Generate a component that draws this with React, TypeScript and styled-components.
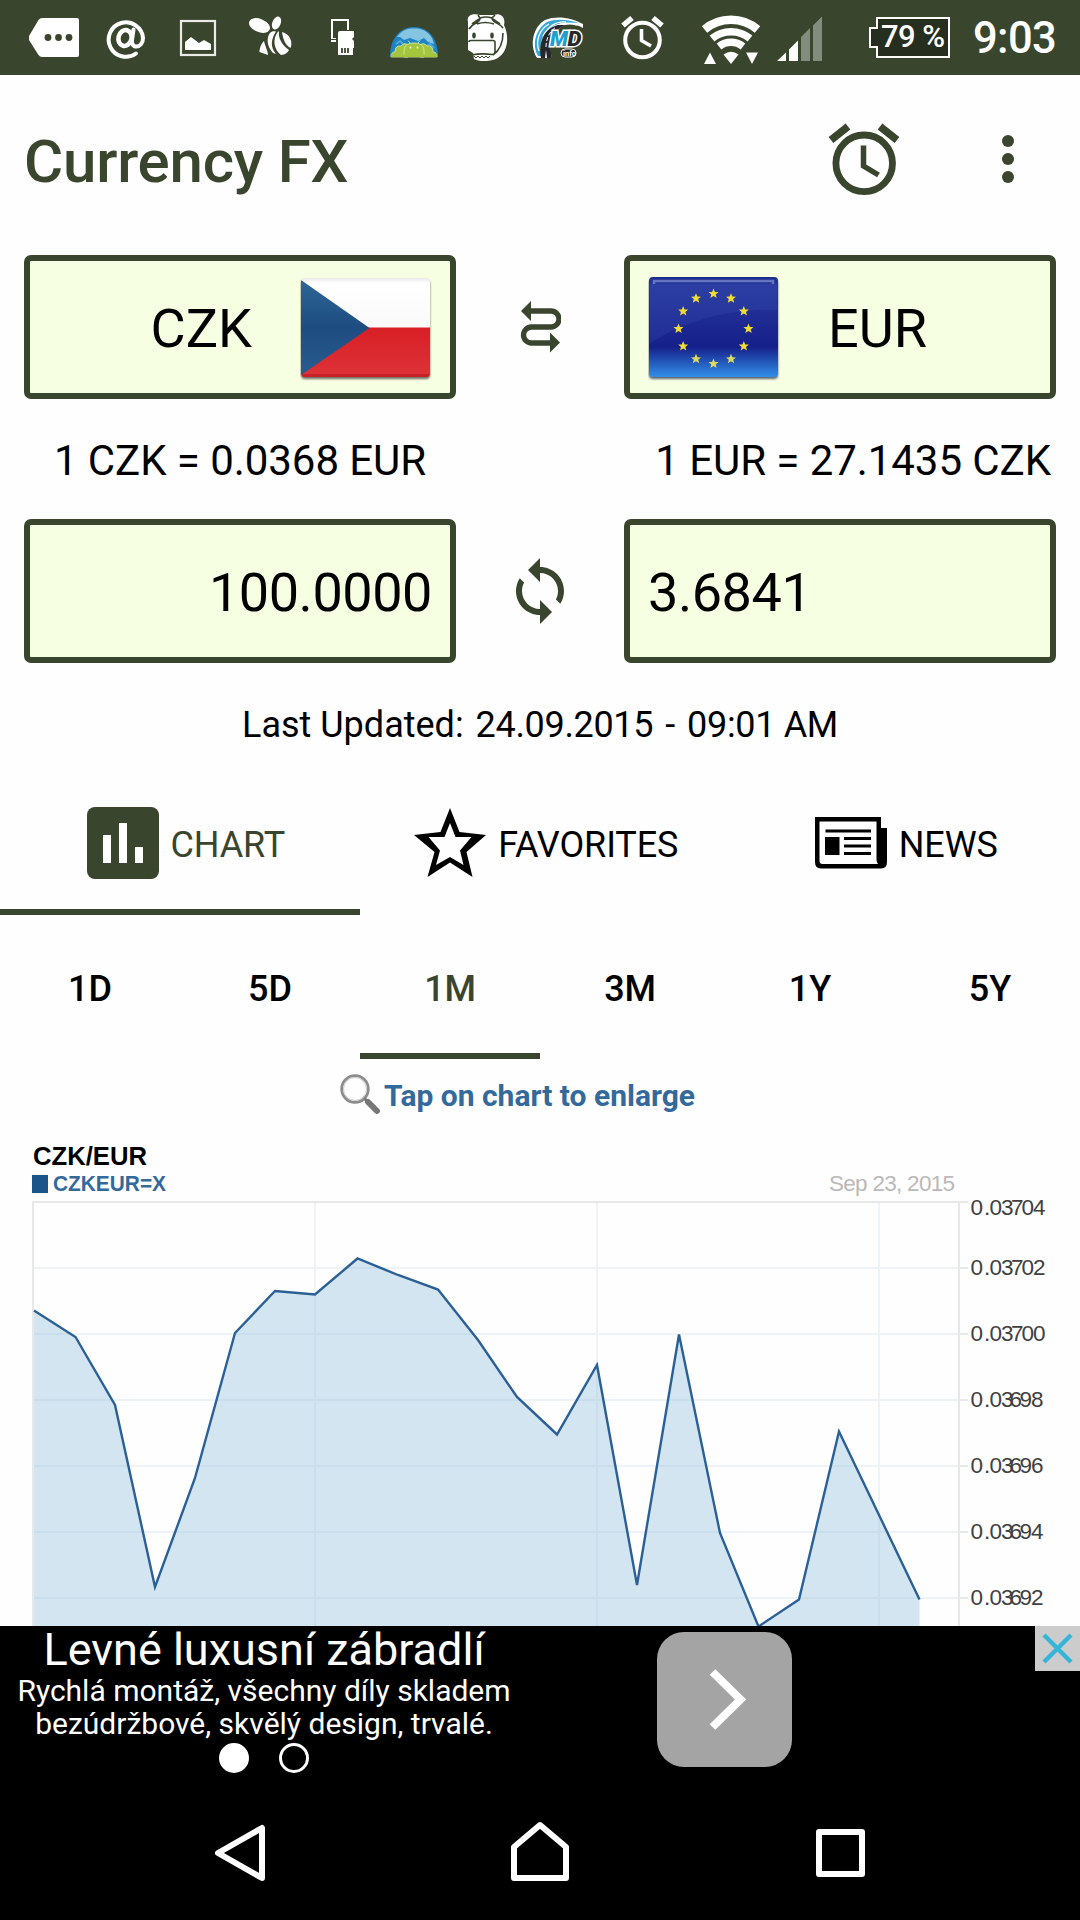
import React from 'react';
import styled, { createGlobalStyle } from 'styled-components';
import { MdSync } from 'react-icons/md';

const GREEN = '#3a452d';
const CREAM = '#f7ffe3';

const GlobalStyle = createGlobalStyle`
  * { box-sizing: border-box; }
  body { margin: 0; background: #fff; font-family: Roboto, "Noto Sans", sans-serif; color: #000; }
  svg { display: block; flex: none; }
`;

const Screen = styled.div`
  width: 1080px;
  height: 1920px;
  display: flex;
  flex-direction: column;
  overflow: hidden;
  background: #fefefe;
`;

const StatusBar = styled.header`
  height: 75px;
  flex: none;
  display: flex;
  align-items: center;
  background: ${GREEN};
  color: #fff;
`;

const Battery = styled.div`
  width: 81px;
  height: 41px;
  margin: 0 0 0 41px;
  display: grid;
  svg, span { grid-area: 1 / 1; }
`;

const BatteryText = styled.span`
  padding-left: 12px;
  font-size: 31px;
  font-weight: 500;
  line-height: 39px;
  white-space: nowrap;
  letter-spacing: -0.6px;
`;

const Clock = styled.span`
  margin-left: 23px;
  font-size: 43.5px;
  font-weight: 500;
  line-height: 78px;
  padding-top: 2px;
  letter-spacing: -0.6px;
`;

const TitleBar = styled.div`
  height: 180px;
  flex: none;
  display: flex;
  align-items: center;
  padding: 0 62px 12px 24px;
`;

const Title = styled.h1`
  margin: 6px auto 0 0;
  font-size: 60px;
  line-height: 72px;
  font-weight: 500;
  color: ${GREEN};
  letter-spacing: -0.2px;
`;

const MenuIcon = styled.svg`
  margin-left: 94px;
`;

const Converter = styled.section`
  flex: none;
  display: grid;
  grid-template-columns: 432px 1fr 432px;
  grid-template-rows: 144px 120px 144px;
  padding: 0 24px;
  align-items: center;
  justify-items: center;
`;

const Field = styled.div<{ $align: 'start' | 'end'; $gap?: number }>`
  width: 432px;
  height: 144px;
  display: flex;
  align-items: center;
  justify-content: flex-${(p) => p.$align};
  gap: ${(p) => p.$gap ?? 0}px;
  padding: 0 18px;
  border: 6px solid ${GREEN};
  border-radius: 7px;
  background: ${CREAM};
`;

const FieldText = styled.span<{ $number?: boolean }>`
  padding-top: 4px;
  font-size: 54px;
  line-height: 64px;
  letter-spacing: ${(p) => (p.$number ? -0.45 : 0)}px;
`;

const Rate = styled.div<{ $right?: boolean }>`
  padding-top: 4px;
  font-size: 42px;
  line-height: 50px;
  letter-spacing: -0.06px;
  white-space: nowrap;
  justify-self: ${(p) => (p.$right ? 'end' : 'center')};
  padding-right: ${(p) => (p.$right ? 5 : 0)}px;
`;

const Updated = styled.div`
  flex: none;
  height: 108px;
  padding-top: 8px;
  display: flex;
  justify-content: center;
  gap: 12px;
  font-size: 36px;
  line-height: 109px;
  white-space: nowrap;
`;

const Digits = styled.span`
  letter-spacing: -0.33px;
`;

const TabRow = styled.nav<{ $cols: number }>`
  flex: none;
  height: 144px;
  display: grid;
  grid-template-columns: repeat(${(p) => p.$cols}, 1fr);
`;

const Tab = styled.div<{ $active?: boolean; $bold?: boolean }>`
  display: flex;
  align-items: center;
  justify-content: center;
  gap: 11px;
  padding: ${(p) => (p.$bold ? '6px 0 0' : '6px 0 0 12.5px')};
  font-size: 36px;
  font-weight: ${(p) => (p.$bold ? 500 : 400)};
  color: ${(p) => (p.$active ? GREEN : '#000')};
  border-bottom: 6px solid ${(p) => (p.$active ? GREEN : 'transparent')};
`;

const TabLabel = styled.span`
  padding-top: 4px;
  line-height: 44px;
  letter-spacing: -0.1px;
`;

const Hint = styled.div`
  flex: none;
  height: 72px;
  display: flex;
  align-items: center;
  padding-left: 339px;
  gap: 3px;
  font-size: 30px;
  font-weight: 700;
  color: #336a9b;
`;

const ChartArea = styled.div`
  flex: none;
  height: 495px;
  overflow: hidden;
`;

const Ad = styled.aside`
  flex: none;
  height: 174px;
  display: flex;
  align-items: flex-start;
  background: #000;
  color: #fff;
`;

const AdCopy = styled.div`
  width: 528px;
  display: flex;
  flex-direction: column;
  align-items: center;
  text-align: center;
`;

const AdTitle = styled.div`
  font-size: 45px;
  line-height: 48px;
  white-space: nowrap;
`;

const AdText = styled.div`
  font-size: 30px;
  line-height: 33px;
  white-space: nowrap;
`;

const Dots = styled.div`
  display: flex;
  gap: 30px;
  margin-top: 3px;
`;

const Dot = styled.i<{ $on?: boolean }>`
  width: 30px;
  height: 30px;
  border-radius: 50%;
  border: 3px solid #fff;
  background: ${(p) => (p.$on ? '#fff' : 'transparent')};
`;

const AdButton = styled.div`
  width: 135px;
  height: 135px;
  margin: 6px auto 0 129px;
  border-radius: 27px;
  background: #a4a4a4;
`;

const AdClose = styled.div`
  width: 45px;
  height: 45px;
  background: #ccc;
`;

const NavBar = styled.footer`
  flex: 1;
  display: flex;
  justify-content: center;
  background: #000;
`;

/* Each status glyph occupies a horizontal slice of the 75px-high bar. */
const Slice = ({ x, w, children }: { x: number; w: number; children: React.ReactNode }) => (
  <svg width={w} height={75} viewBox={`${x} 0 ${w} 75`} fill="#fff">{children}</svg>
);

const StatusIcons = () => (
  <>
    <Slice x={0} w={93}>
      <path d="M42 18H77Q79 18 79 20V55Q79 57 77 57H42Q40 57 38.500 55L29 40V36L38.500 20Q40 18 42 18Z" />
      <g fill={GREEN}><circle cx="48" cy="37.500" r="3.400" /><circle cx="58.500" cy="37.500" r="3.400" /><circle cx="69" cy="37.500" r="3.400" /></g>
    </Slice>
    <Slice x={93} w={67}>
      <g fill="none" stroke="#fff" strokeWidth="4" strokeLinecap="round">
        <path d="M136 53.500A17.200 17.200 0 1 1 143 38C143 43 140 46.500 136.500 46.500S131.500 43.500 132 40L133.500 29.500" />
        <ellipse cx="125" cy="38" rx="6.500" ry="8" transform="rotate(15 125 38)" strokeWidth="4.500" />
      </g>
    </Slice>
    <Slice x={160} w={74}>
      <rect x="181" y="21" width="34" height="34" fill="none" stroke="#e9ebe7" strokeWidth="2.200" />
      <path d="M185 50V42L191 37L199 43L204 40L211 44V50Z" />
    </Slice>
    <Slice x={234} w={72}>
      <ellipse cx="259.500" cy="25.500" rx="11" ry="6.600" transform="rotate(22 259.500 25.500)" />
      <ellipse cx="276.500" cy="23" rx="4.200" ry="6.800" transform="rotate(22 276.500 23)" />
      <path d="M270 33C266 38 267 47 273 53L276 54C270 47 271 39 276 31.500C273 31 271.500 31.500 270 33Z" />
      <path d="M278 31.500C272 39 274 50 281 55C285 55 288 52 289 50C282 45 278 38 279 31.500Z" />
      <path d="M282 32C283 39 285 45 290.500 48C293 42 290 34 282 32Z" />
      <path d="M264 41C260 45 259.500 50 259.500 52L268 55C268 51 265 46 264 41Z" />
    </Slice>
    <Slice x={306} w={66}>
      <path d="M331 19H349V30H347V21H333V38H336V42H331Z" />
      <path d="M331 39.500H336" stroke={GREEN} />
      <path d="M340 31H354V37L352 39L354 41V48H353V55H338V33Q338 31 340 31Z" />
      <path d="M342 48V53M345 48V53M348 48V53" stroke={GREEN} strokeWidth="1.800" />
    </Slice>
    <Slice x={372} w={84}>
      <path d="M390 57C390 38 400 27 414 27S438 38 438 57Z" fill="#1f84c4" />
      <path d="M397 37C402 30 407 28.500 414 28.500S427 30 432 38L434 44L428 42L424 38L418 41L410 38L404 40L400 37Z" fill="#86c5e2" />
      <path d="M396 44l4-3 3 3M425 47l5-3 4 4" fill="none" stroke="#4fa9d6" strokeWidth="2" />
      <g fill="#a4c63c" stroke="#dcebb0" strokeWidth=".8">
        <path d="M391 57Q391 52 395 52Q395 45 401 46Q404 42 408 45V57ZM437 57Q437 52 433 52Q433 45 427 46Q424 42 420 45V57Z" />
        <path d="M404 57V51C404 45 408 43 414 43S424 45 424 51V57ZM410 43L408 40.500M418 43L420 40.500" />
      </g>
      <path d="M391 54.500H437V57H391Z" fill="#a4c63c" />
      <circle cx="410.500" cy="47.500" r=".9" /><circle cx="417.500" cy="47.500" r=".9" />
    </Slice>
    <Slice x={456} w={66}>
      <path d="M468 22C466 15 473 13 480 15H494C501 12 506 18 504 25C510 38 507 52 499 57C494 62 478 62 474 59L473 53L468 50V25Z" />
      <g fill="none" stroke={GREEN} strokeWidth="1.600">
        <path d="M469 29C473 22 480 24 480 18L478 15M503 28C498 21 493 24 492 18L495 15M480 18Q486 16 492 18M472 24L479 19M500 24L493 19M477 24Q485 21 494 24" />
        <path d="M469 42Q469 40.500 471 40.500H493Q495 40.500 495 42.500V52Q495 54.500 492 54.500Q482 53 471 55M493 55Q503 48 503 33" />
      </g>
      <ellipse cx="474" cy="35.500" rx="1.800" ry="3" fill={GREEN} />
      <ellipse cx="492" cy="35.500" rx="1.800" ry="3" fill={GREEN} />
      <path d="M474 56l2 2 2-2 2 2 2-2 2 2 2-2 2 2 2-2" stroke={GREEN} fill="none" />
    </Slice>
    <Slice x={522} w={78}>
      <path d="M537 58C529 45 533 27 545 20C557 15 572 18 583 24V28C569 20 559 26 554 35C549 43 550 51 552 58Z" />
      <path d="M538 56C531 43 537 28 547 22C557 18 570 20 579 23C562 21 550 24 543 36C540 43 540 50 542 56Z" fill="#35a8d8" />
      <path d="M539 51C535 40 540 29 549 24M566 22C555 21 548 27 543 36M577 25C566 22 558 23 551 29" stroke="#fff" strokeWidth="1.300" fill="none" />
      <path d="M541 58C538 43 544 28 558 25L566 25C554 29 548 40 552 58H547L546 50L545 58Z" fill="#25282a" />
      <path d="M546 47C546 38 550 31 556 27" stroke="#fff" fill="none" strokeDasharray="4 2" />
      <g fontFamily="Roboto, sans-serif" fontStyle="italic" fontWeight="900" fontSize="21" stroke="#fff" strokeWidth="2.800" paintOrder="stroke">
        <text x="550" y="46" fill="#1e9fd0" textLength="18" lengthAdjust="spacingAndGlyphs">M</text>
        <text x="567.500" y="46" fill="#25282a" textLength="14" lengthAdjust="spacingAndGlyphs">D</text>
      </g>
      <rect x="561" y="49" width="15" height="8" rx="4" fill="#25282a" stroke="#fff" />
      <text x="563" y="56" fontSize="7.500" fontWeight="700" fontFamily="Roboto, sans-serif">info</text>
    </Slice>
    <Slice x={600} w={84}>
      <g fill="none" stroke="#fff">
        <circle cx="642.500" cy="40" r="17.300" strokeWidth="4" />
        <path d="M641.500 29V40.500L651 46" strokeWidth="3.600" />
        <path d="M623 25.500L632 18M662 25.500L653 18" strokeWidth="5.500" />
      </g>
    </Slice>
    <Slice x={684} w={84}>
      <g fill="none" stroke="#fff">
        <path d="M704.500 29.500A41 41 0 0 1 757.500 29.500" strokeWidth="8.500" />
        <path d="M712 38.500A30 30 0 0 1 750 38.500" strokeWidth="7.500" />
        <path d="M719 46.500A19 19 0 0 1 743 46.500" strokeWidth="7.500" />
      </g>
      <path d="M723.500 54.500Q731 49 738.500 54.500L731 64Z" />
      <path d="M704 64L710 52.500L716 64ZM746 52.500H758L752 64Z" />
    </Slice>
    <Slice x={768} w={60}>
      <path d="M777 61L786 52.500V61ZM789 61V49.500L798 40.500V61Z" />
      <path d="M801 61V37L810 28V61ZM813 61V25.500L822 16.500V61Z" fill="#838d7d" />
    </Slice>
  </>
);

const HeaderAlarm = () => (
  <svg width="80" height="80" viewBox="824 119 80 80" fill="none" stroke={GREEN}>
    <circle cx="864.200" cy="163.300" r="28.300" strokeWidth="6.800" />
    <path d="M863.500 145.500V166L878.500 175" strokeWidth="5.500" />
    <path d="M831 140L848 126.500M897 140L880 126.500" strokeWidth="7.500" />
  </svg>
);

const Menu = () => (
  <MenuIcon width="20" height="80" viewBox="998 119 20 80" fill={GREEN}>
    <circle cx="1008" cy="141" r="6" /><circle cx="1008" cy="159" r="6" /><circle cx="1008" cy="177" r="6" />
  </MenuIcon>
);

const CzechFlag = () => (
  <svg width="132" height="108" viewBox="300 273 132 108">
    <defs>
      <linearGradient id="cw" x2="0" y2="1"><stop stopColor="#e9e9ee" /><stop offset=".1" stopColor="#fff" /><stop offset="1" stopColor="#fafafa" /></linearGradient>
      <linearGradient id="cr" x2="0" y2="1"><stop stopColor="#d81f25" /><stop offset="1" stopColor="#dd3338" /></linearGradient>
      <linearGradient id="cb" x2="0" y2="1"><stop stopColor="#2e6598" /><stop offset=".5" stopColor="#1d4c80" /><stop offset="1" stopColor="#295c90" /></linearGradient>
      <clipPath id="cc"><rect x="301" y="278" width="129" height="99" rx="4" /></clipPath>
      <filter id="soft"><feGaussianBlur stdDeviation="1.300" /></filter>
    </defs>
    <rect x="301" y="280" width="129" height="99" rx="4" fill="#6d6a60" filter="url(#soft)" />
    <g clipPath="url(#cc)">
      <rect x="301" y="278" width="129" height="50" fill="url(#cw)" />
      <rect x="301" y="327.500" width="129" height="50" fill="url(#cr)" />
      <path d="M301 280L369.500 328L301 375Z" fill="url(#cb)" />
      <path d="M301 375.500H430" stroke="#b5161d" strokeWidth="3" opacity=".55" />
    </g>
  </svg>
);

const STAR = 'M0 -5L1.400 -1.600L5 -1.400L2.200 .9L3.200 4.500L0 2.500L-3.200 4.500L-2.200 .9L-5 -1.400L-1.400 -1.600Z';

const EuroFlag = () => (
  <svg width="132" height="108" viewBox="648 273 132 108">
    <defs>
      <linearGradient id="eu" x2="0" y2="1">
        <stop stopColor="#1c2d8c" /><stop offset=".08" stopColor="#27389d" /><stop offset=".7" stopColor="#16208a" /><stop offset="1" stopColor="#318fe8" />
      </linearGradient>
      <linearGradient id="eg" x2="0" y2="1"><stop stopColor="#3448ac" stopOpacity=".4" /><stop offset="1" stopColor="#2c3fa5" stopOpacity=".4" /></linearGradient>
      <filter id="softEu"><feGaussianBlur stdDeviation="1.300" /></filter>
    </defs>
    <rect x="649" y="279" width="129" height="100" rx="4" fill="#5d6270" filter="url(#softEu)" />
    <rect x="649" y="277" width="129" height="100" rx="4" fill="url(#eu)" />
    <path d="M650 284V343C690 318 735 308 777 310V284Z" fill="url(#eg)" />
    <path d="M654 284V281H773V284" fill="none" stroke="#8591d3" strokeWidth="2.500" opacity=".7" />
    {Array.from({ length: 12 }, (_, i) => {
      const a = (i * Math.PI) / 6;
      return <path key={i} d={STAR} fill={i > 4 && i < 8 ? '#dcdc60' : '#f0dc32'} transform={`translate(${713.5 + 35 * Math.sin(a)} ${328.5 - 35 * Math.cos(a)})`} />;
    })}
  </svg>
);

const SwapIcon = () => (
  <svg width="42" height="56" viewBox="520 299 42 56">
    <path d="M530 311H552A8 8 0 0 1 552 327H532.500A8 8 0 0 0 532.500 343H552" fill="none" stroke={GREEN} strokeWidth="5.300" />
    <path d="M522 311L532 301V321ZM561 342.500L551 332.500V352.500Z" fill={GREEN} />
  </svg>
);

const ChartIcon = () => (
  <svg width="72" height="72" viewBox="0 0 72 72">
    <rect width="72" height="72" rx="8" fill={GREEN} />
    <path d="M16 28H24V56H16ZM32 16H40V56H32ZM48 40H56V56H48Z" fill="#fff" />
  </svg>
);

const StarIcon = () => (
  <svg width="73" height="72" viewBox="414 807 73 72">
    <path fillRule="evenodd" d="M450 808L459.500 832L486 835L466.500 852L472.500 877L450 862.500L427.500 877L434.500 852L414 835L440.500 832ZM450 823L455.500 837H471.500L460 850.500L463.500 865L450 857L436 865L440 850.500L428.500 837H444.500Z" />
  </svg>
);

const NewsIcon = () => (
  <svg width="73" height="72" viewBox="814 807 73 72">
    <path fillRule="evenodd" d="M814 817H880V828H886V862Q886 868.500 880 868.500H820Q814 868.500 814 862ZM818.500 821.500V861Q818.500 864 821.500 864H877Q875.500 862 875.500 860V821.500Z" />
    <path d="M824.500 831H870M843 838.500H870M843 846H870M843 853.500H870" stroke="#000" strokeWidth="3" />
    <rect x="824" y="837" width="14.500" height="18" />
  </svg>
);

const Magnifier = () => (
  <svg width="42" height="44" viewBox="339 1073 42 44" fill="none">
    <circle cx="355" cy="1089" r="13.300" stroke="#8c8c8c" strokeWidth="2.800" />
    <circle cx="355" cy="1089" r="11.500" stroke="#ccc" />
    <path d="M364.500 1098.500L368 1102" stroke="#777" strokeWidth="3" />
    <path d="M368 1102L377 1111" stroke="#777" strokeWidth="6" strokeLinecap="round" />
  </svg>
);

const POINTS: [number, number][] = [
  [34, 1310.5], [75.5, 1337], [115, 1405], [155, 1587], [195, 1478], [235, 1333], [275, 1291], [315, 1294.5],
  [357.5, 1258.5], [398, 1275], [438, 1289.5], [478, 1340], [517, 1397], [557, 1434.5], [597, 1365],
  [637, 1585], [679, 1334.5], [720, 1533], [758.5, 1626.5], [799, 1599.5], [839, 1431.5], [879, 1515], [919.5, 1599.5],
];

/* The last digits sit tighter together on the labels that contain a 6 and a 9. */
const WIDE = [970.5, 984, 989.5, 1001, 1011, 1021.5, 1033];
const TIGHT = [970.5, 984, 989.5, 1001, 1009.5, 1019.5, 1031];
const LABELS: [string, number, number[]][] = [
  ['0.03704', 1215, WIDE],
  ['0.03702', 1275, WIDE],
  ['0.03700', 1341, WIDE],
  ['0.03698', 1407, TIGHT],
  ['0.03696', 1473, TIGHT],
  ['0.03694', 1539, TIGHT],
  ['0.03692', 1605, TIGHT],
];
const GRID_Y = [1268, 1334, 1400, 1466, 1532, 1598];
const GRID_X = [315, 597, 879];

const RateChart = () => {
  const line = POINTS.map((p) => p.join(',')).join(' ');
  return (
    <svg width="1080" height="495" viewBox="0 1131 1080 495" fontFamily='"Liberation Sans", Arial, sans-serif'>
      <text x="33" y="1165" fontSize="25" fontWeight="700" textLength="114" lengthAdjust="spacingAndGlyphs">CZK/EUR</text>
      <rect x="32" y="1175" width="16" height="18" fill="#1b5489" />
      <text x="53" y="1191" fontSize="22.500" fontWeight="700" fill="#336a9b" textLength="113" lengthAdjust="spacingAndGlyphs">CZKEUR=X</text>
      <text x="829" y="1191" fontSize="22.500" fill="#b9b9b9" textLength="126" lengthAdjust="spacing">Sep 23, 2015</text>
      <path d={GRID_Y.map((y) => `M34 ${y}H958`).join('') + GRID_X.map((x) => `M${x} 1203V1640`).join('')} stroke="#edf3f7" strokeWidth="2" />
      <path d={`M33 1640V1202H968M959 1202V1640${GRID_Y.map((y) => `M960 ${y}H968`).join('')}`} fill="none" stroke="#e8e8e8" strokeWidth="2" />
      <polygon points={`34,1640 ${line} 919.5,1640`} fill="#7fb4dc" fillOpacity=".33" />
      <polyline points={line} fill="none" stroke="#2a6096" strokeWidth="2.400" />
      {LABELS.map(([t, y, xs]) => (
        <text key={t} x={xs.join(' ')} y={y} fontSize="22.500" fill="#404040">{t}</text>
      ))}
    </svg>
  );
};

export default function App() {
  return (
    <>
      <GlobalStyle />
      <Screen>
        <StatusBar>
          <StatusIcons />
          <Battery>
            <svg width="81" height="41" viewBox="0 0 81 41">
              <path d="M8 1H80V40H8V30H1V11H8Z" fill="#262e1f" stroke="#fff" strokeWidth="2" />
            </svg>
            <BatteryText>79 %</BatteryText>
          </Battery>
          <Clock>9:03</Clock>
        </StatusBar>
        <TitleBar>
          <Title>Currency FX</Title>
          <HeaderAlarm />
          <Menu />
        </TitleBar>
        <Converter>
          <Field $align="end" $gap={48}><FieldText>CZK</FieldText><CzechFlag /></Field>
          <SwapIcon />
          <Field $align="start" $gap={48}><EuroFlag /><FieldText>EUR</FieldText></Field>
          <Rate>1 CZK = 0.0368 EUR</Rate>
          <span />
          <Rate $right>1 EUR = 27.1435 CZK</Rate>
          <Field $align="end"><FieldText $number>100.0000</FieldText></Field>
          <MdSync size={72} color={GREEN} />
          <Field $align="start"><FieldText $number>3.6841</FieldText></Field>
        </Converter>
        <Updated>
          <span>Last Updated:</span>
          <Digits>24.09.2015</Digits>
          <span>-</span>
          <Digits>09:01 AM</Digits>
        </Updated>
        <TabRow $cols={3}>
          <Tab $active><ChartIcon /><TabLabel>CHART</TabLabel></Tab>
          <Tab><StarIcon /><TabLabel>FAVORITES</TabLabel></Tab>
          <Tab><NewsIcon /><TabLabel>NEWS</TabLabel></Tab>
        </TabRow>
        <TabRow $cols={6}>
          {['1D', '5D', '1M', '3M', '1Y', '5Y'].map((t) => (
            <Tab key={t} $bold $active={t === '1M'}><TabLabel>{t}</TabLabel></Tab>
          ))}
        </TabRow>
        <Hint><Magnifier />Tap on chart to enlarge</Hint>
        <ChartArea><RateChart /></ChartArea>
        <Ad>
          <AdCopy>
            <AdTitle>Levné luxusní zábradlí</AdTitle>
            <AdText>Rychlá montáž, všechny díly skladem<br />bezúdržbové, skvělý design, trvalé.</AdText>
            <Dots><Dot $on /><Dot /></Dots>
          </AdCopy>
          <AdButton>
            <svg width="135" height="135" viewBox="657 1632 135 135">
              <path d="M712.500 1672L740.500 1699.500L712.500 1727" fill="none" stroke="#fff" strokeWidth="8" />
            </svg>
          </AdButton>
          <AdClose>
            <svg width="45" height="45" viewBox="0 0 45 45">
              <path d="M9 9L36 36M36 9L9 36" stroke="#35b5d9" strokeWidth="4.500" />
            </svg>
          </AdClose>
        </Ad>
        <NavBar>
          <svg width="660" height="120" viewBox="210 1800 660 120" fill="none" stroke="#fff" strokeWidth="6" strokeLinejoin="round">
            <path d="M262 1828V1878L218 1853Z" />
            <path d="M514 1847L540 1825L566 1847V1878H514Z" />
            <rect x="819" y="1832" width="43" height="42" />
          </svg>
        </NavBar>
      </Screen>
    </>
  );
}
